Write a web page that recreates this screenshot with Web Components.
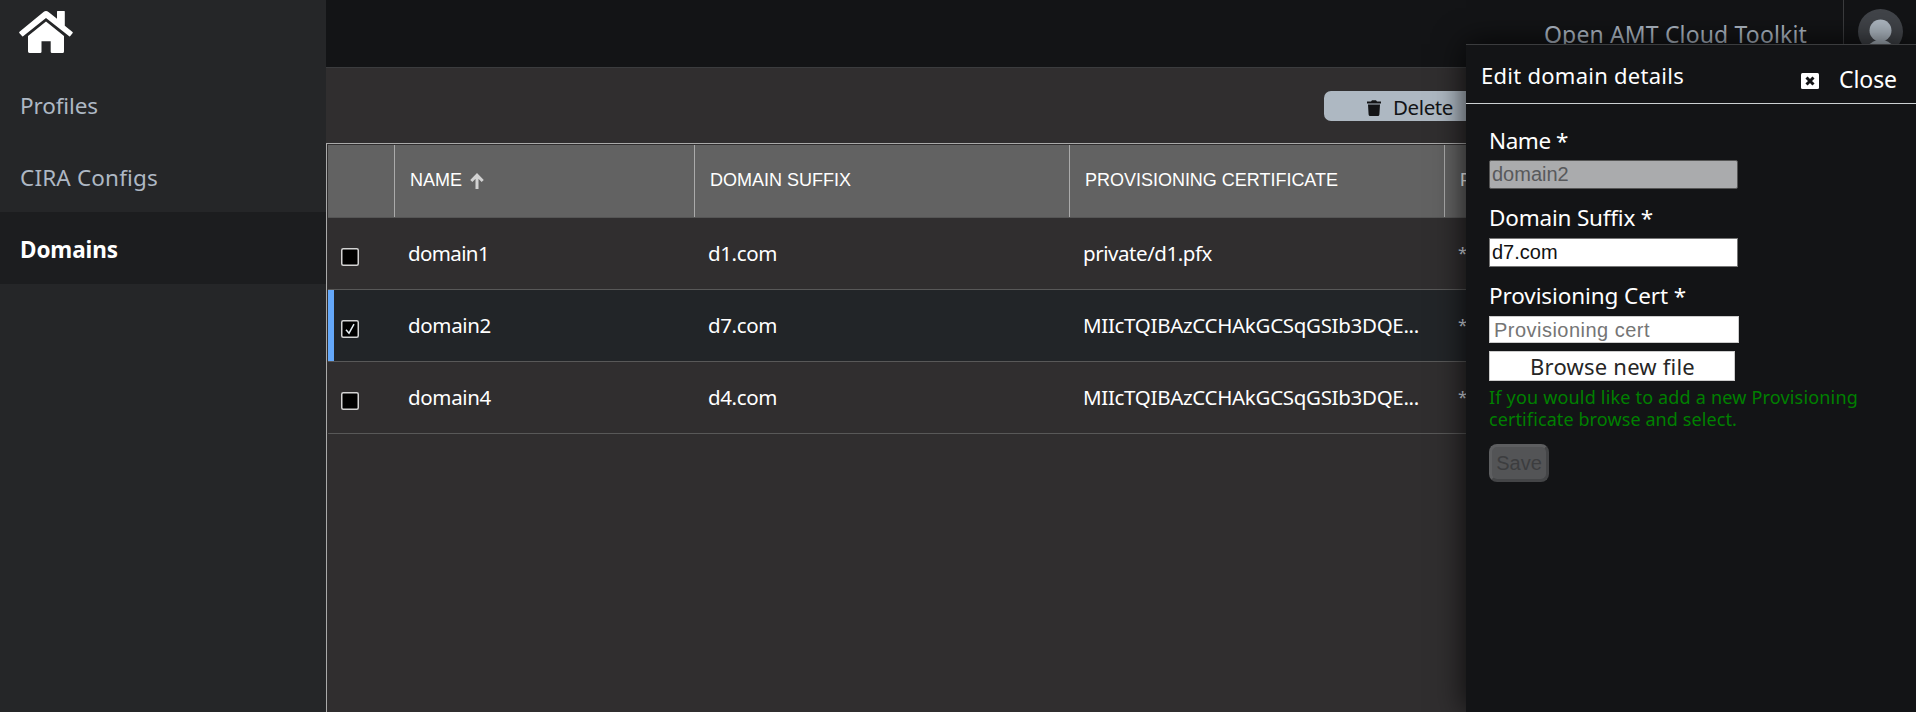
<!DOCTYPE html>
<html lang="en"><head><meta charset="utf-8"><title>Open AMT Cloud Toolkit</title>
<style>
html,body{margin:0;height:712px;overflow:hidden;background:#302e2f}
body{font-family:"Noto Sans","Open Sans",sans-serif;color:#fff}
</style></head><body>
<amt-app></amt-app>
<script>
class Base extends HTMLElement{
  render(html){ if(!this.shadowRoot){ const t=document.createElement('template'); t.innerHTML=html; this.attachShadow({mode:'open'}).append(t.content.cloneNode(true)); } }
}
/* A single line whose tracking is adjusted to fill a given measure. */
class FitLine extends Base{
  connectedCallback(){
    this.render('<style>:host{display:block;white-space:pre}span{display:inline-block}</style><span><slot></slot></span>');
    const s=this.shadowRoot.querySelector('span'), w=+this.getAttribute('measure');
    if(w){ const d=w-s.getBoundingClientRect().width; s.style.letterSpacing=(d/this.textContent.length)+'px'; }
  }
}
class NavItem extends Base{
  connectedCallback(){ this.render(`<style>
    :host{display:block;height:72px;box-sizing:border-box;padding:2px 0 0 20px;font-size:22.5px;line-height:72px;color:#aeb8c4}
    :host([active]){background:#1c1d1f;color:#fff;font-weight:700}</style><slot></slot>`); }
}
class SideNav extends Base{
  connectedCallback(){ this.render(`<style>
    :host{display:block;background:#252628}
    .home{height:68px;padding:10px 0 0 18px;box-sizing:border-box}
    svg{display:block}</style>
    <div class="home"><svg width="56" height="44" viewBox="0 0 56 44" fill="#fff">
      <path d="M39 1.5q0-.5.5-.5h6.8q.5 0 .5.5v14.2l7.7 6.2q.6.5.2 1.1l-2.4 3.1q-.5.6-1.1.1L28 8 5.100 26.200q-.6.5-1.100-.1L1.300 22.900q-.4-.6.2-1.100L25.500 1.900q2.500-1.800 5 0L39 8.700z"/>
      <path d="M28 11.500 46 26v15.500q0 1.500-1.500 1.500H34q-1.300 0-1.300-1.300V31.300H23.500v10.400q0 1.300-1.300 1.300H11.500Q10 43 10 41.500V26z"/></svg></div>
    <nav-item><fit-line measure="78">Profiles</fit-line></nav-item>
    <nav-item><fit-line measure="138">CIRA Configs</fit-line></nav-item>
    <nav-item active><fit-line measure="98">Domains</fit-line></nav-item>`); }
}
class TopBar extends Base{
  connectedCallback(){ this.render(`<style>
    :host{display:flex;justify-content:flex-end;height:67px;background:#131416;border-bottom:1px solid #3b3c3e}
    .t{font-size:23px;line-height:68px;color:#aeb8c4;margin-right:36px}
    .a{width:73px;border-left:1px solid #3b3c3e;padding:9px 0 0 14px;box-sizing:border-box}</style>
    <fit-line class="t" measure="263">Open AMT Cloud Toolkit</fit-line>
    <div class="a"><svg width="45" height="45" viewBox="0 0 45 45"><circle cx="22.500" cy="22.500" r="22.500" fill="#414449"/><circle cx="22.500" cy="21.500" r="11" fill="#aeb8c2"/><path d="M19 31h7q8 3 9 7-5.500 5-12.500 5T10 38q1-4 9-7z" fill="#aeb8c2"/></svg></div>`); }
}
class ToolBar extends Base{
  connectedCallback(){ this.render(`<style>
    :host{display:flex;height:75px;padding:23px 0 0 998px;box-sizing:border-box}
    .b{display:flex;align-items:center;width:180px;height:30px;border-radius:7px;background:#aeb8c2;color:#131416;padding-left:43px;gap:12px;box-sizing:border-box;font-size:20.500px;line-height:30px}
    fit-line{margin-top:2px}svg{margin-top:4px}</style>
    <div class="b"><svg width="14" height="16" viewBox="0 0 14 16" fill="#131416"><path d="M0 1.500h4L5 .3h4l1 1.200h4v2H0zM1 4.500h12l-.6 10q-.1 1.500-1.500 1.500H3.100q-1.400 0-1.500-1.500z"/></svg><fit-line measure="60">Delete</fit-line></div>`); }
}
class CheckBox extends Base{
  connectedCallback(){ this.render(`<style>
    :host{display:block;width:18px;height:18px}svg{display:block}path{display:none}:host([checked]) path{display:block}</style>
    <svg width="18" height="18" viewBox="0 0 18 18"><rect x=".75" y=".75" width="16.500" height="16.500" rx="1.500" fill="#000" stroke="#d4d4d4" stroke-width="1.500"/><path d="m5 9.800 3 3.400 5-9" fill="none" stroke="#e8f0f5" stroke-width="1.500"/></svg>`); }
}
class GridRow extends Base{
  connectedCallback(){ this.render(`<style>
    :host{display:grid;grid-template-columns:66px 300px 375px 375px 470px;height:71px;border-bottom:1px solid #585858;font-size:20.500px;line-height:71px;padding-left:0}
    :host([selected]){background:#222528;box-shadow:inset 6px 0 #64a8fa}
    check-box{margin:30px 0 0 13px}::slotted(*){padding-left:14px}::slotted(span){color:#d8dde2;font-size:17px;line-height:69px}</style>
    <check-box></check-box><slot></slot>`);
    if(this.hasAttribute('selected')) this.shadowRoot.querySelector('check-box').setAttribute('checked',''); }
}
class GridHead extends Base{
  connectedCallback(){ this.render(`<style>
    :host{display:grid;grid-template-columns:67px 300px 375px 375px 470px;height:72px;background:#626262;border-bottom:1px solid #555;font:18px/71px "Liberation Sans",Arial,sans-serif}
    div{display:flex;border-right:1px solid #aaa;padding-left:15px}
    svg{margin:28px 0 0 8px}</style>
    <div></div><div><fit-line measure="52">NAME</fit-line><svg width="14" height="16" viewBox="0 0 14 16" fill="none" stroke="#d2d2d2" stroke-width="3"><path d="M7 16V2M1.300 8 7 2.200 12.700 8"/></svg></div>
    <div><fit-line measure="141">DOMAIN SUFFIX</fit-line></div><div><fit-line measure="253">PROVISIONING CERTIFICATE</fit-line></div><div>P</div>`); }
}
class DataGrid extends Base{
  connectedCallback(){ this.render(`<style>
    :host{display:block;border:solid #aaa;border-width:1px 0 0 1px;padding:1px 0 0 1px;height:600px}</style>
    <grid-head></grid-head>
    <grid-row><fit-line measure="81">domain1</fit-line><fit-line measure="69">d1.com</fit-line><fit-line measure="129">private/d1.pfx</fit-line><span>*</span></grid-row>
    <grid-row selected><fit-line measure="83">domain2</fit-line><fit-line measure="69">d7.com</fit-line><fit-line measure="336">MIIcTQIBAzCCHAkGCSqGSIb3DQE...</fit-line><span>*</span></grid-row>
    <grid-row><fit-line measure="83">domain4</fit-line><fit-line measure="69">d4.com</fit-line><fit-line measure="336">MIIcTQIBAzCCHAkGCSqGSIb3DQE...</fit-line><span>*</span></grid-row>`); }
}
class EditPanel extends Base{
  connectedCallback(){ this.render(`<style>
    :host{display:block;background:#131416;border-top:1px solid #3b3c3e;box-shadow:0 0 30px rgba(0,0,0,.8);box-sizing:border-box}
    header{display:flex;height:58px;border-bottom:1px solid #ccd0d2;padding:0 19px 0 15px;font-size:22px}
    .h{line-height:61px;margin-right:auto}.c{font-size:23px;line-height:69px;margin-left:20px}
    header svg{margin-top:28px}
    section{padding:23px 0 0 23px;display:flex;flex-direction:column;align-items:flex-start}
    .l{font-size:22.500px;line-height:26px;height:33px}.l:first-child{line-height:28px}
    .f{box-sizing:border-box;width:249px;height:29px;border:1px solid #777;background:#fff;font:20px/26px "Liberation Sans",Arial,sans-serif;color:#111;padding-left:2px;margin-bottom:16px}
    .d{background:#aaabad;border-color:#555;border-radius:2px;color:#58595b}
    .p{width:250px;height:27px;border-color:#ccc;color:#757575;padding-left:4px;margin-bottom:8px}
    .b{box-sizing:border-box;width:246px;height:30px;border:1px solid #ccc;background:#fff;color:#262626;padding-left:40px;font-size:22px;line-height:29px;margin-bottom:5px}
    .n{color:#008000;font-size:18px;line-height:22px}
    .s{box-sizing:border-box;width:60px;height:38px;margin-top:14px;border:3px solid;border-color:#5d5e60 #444547 #444547 #5d5e60;border-radius:8px;background:#535456;color:#3c3d3f;font:20px/32px "Liberation Sans",Arial,sans-serif;text-align:center;padding:0}
    </style>
    <header><fit-line class="h" measure="203">Edit domain details</fit-line><svg width="18" height="16" viewBox="0 0 18 16"><rect width="18" height="16" rx="1.500" fill="#fff"/><path d="m5.500 4.500 7 7m0-7-7 7" stroke="#131416" stroke-width="3"/></svg><fit-line class="c" measure="58">Close</fit-line></header>
    <section><fit-line class="l" measure="79">Name *</fit-line><div class="f d">domain2</div>
    <fit-line class="l" measure="164">Domain Suffix *</fit-line><div class="f">d7.com</div>
    <fit-line class="l" measure="197">Provisioning Cert *</fit-line><div class="f p"><fit-line measure="156">Provisioning cert</fit-line></div>
    <div class="b"><fit-line measure="165">Browse new file</fit-line></div>
    <fit-line class="n" measure="369">If you would like to add a new Provisioning</fit-line><fit-line class="n" measure="248">certificate browse and select.</fit-line>
    <button class="s" type="button">Save</button></section>`); }
}
class AmtApp extends Base{
  connectedCallback(){ this.render(`<style>
    :host{display:grid;grid-template-columns:326px 1590px;height:712px;position:relative;overflow:hidden}
    main{min-width:0;overflow:hidden;background:#302e2f}
    edit-panel{position:absolute;left:1466px;top:44px;width:450px;height:668px}</style>
    <side-nav></side-nav><main><top-bar></top-bar><tool-bar></tool-bar><data-grid></data-grid></main><edit-panel></edit-panel>`); }
}
for(const [n,c] of [['fit-line',FitLine],['nav-item',NavItem],['side-nav',SideNav],['top-bar',TopBar],['tool-bar',ToolBar],['check-box',CheckBox],['grid-row',GridRow],['grid-head',GridHead],['data-grid',DataGrid],['edit-panel',EditPanel],['amt-app',AmtApp]]) customElements.define(n,c);
</script></body></html>
